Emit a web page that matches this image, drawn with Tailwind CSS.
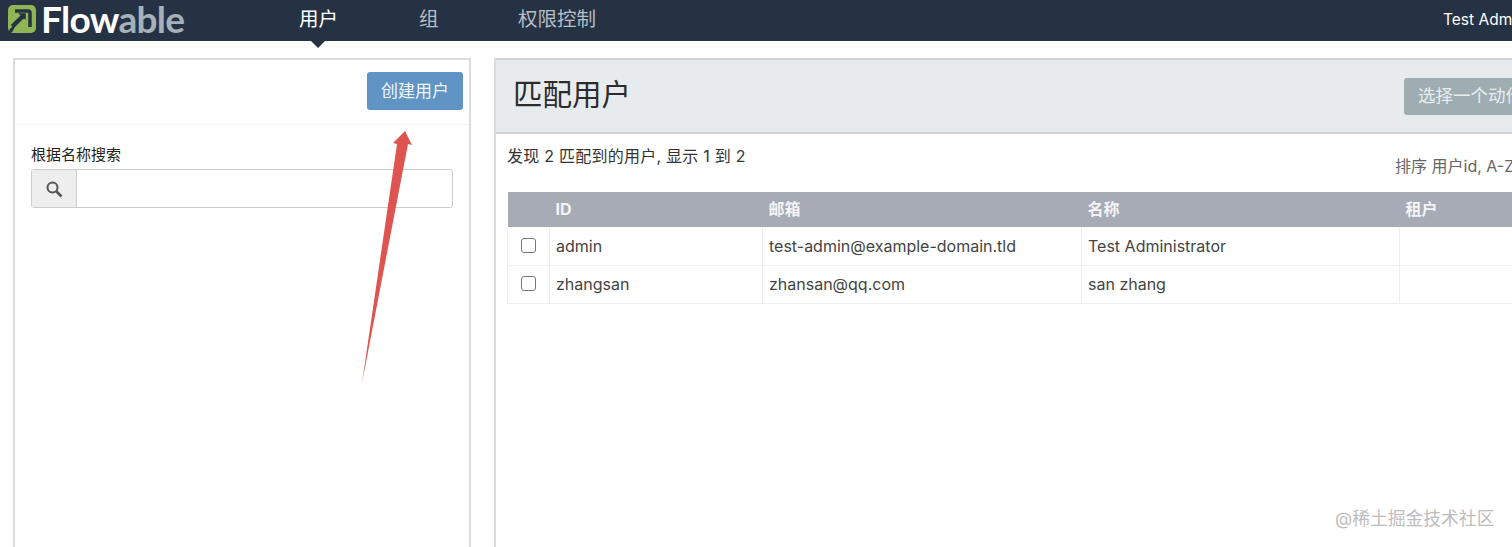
<!DOCTYPE html>
<html lang="zh-CN">
<head>
  <meta charset="UTF-8">
  <title>Flowable 用户</title>
  <script src="https://cdn.jsdelivr.net/npm/@tailwindcss/browser@4"></script>
</head>
<body class="relative h-[547px] w-[1512px] overflow-hidden bg-white font-['Inter','Noto_Sans_CJK_SC',sans-serif] text-[#333]">
  <!-- top nav -->
  <header class="flex h-[41px] items-center bg-[#253244] text-white">
    <div class="ml-[8px] flex w-[291px] shrink-0 -translate-y-[2px] items-center">
      <svg class="h-[28px] w-[28px] shrink-0" viewBox="0 0 28 28">
        <rect width="28" height="28" rx="5" fill="#8fb555"/>
        <path d="M7 6h13a2 2 0 0 1 2 2v14" fill="none" stroke="#253244" stroke-width="3.500"/>
        <path d="M2 27l2-1 2-4 10-10 1 1V9H12l1.500 1.500L4 20l1 2-3 3z" fill="#253244" stroke="#253244" stroke-width="1.500"/>
      </svg>
      <span class="ml-[5px] font-['Lato',sans-serif] text-[37px] leading-none font-bold tracking-[-0.7px]">Flow<span class="text-[#a5b0b8]">able</span></span>
    </div>
    <nav class="flex -translate-y-[1px] items-center text-[19.5px]">
      <a class="relative w-[120px] text-white">用户</a>
      <a class="w-[99px] text-[#b8bec6]">组</a>
      <a class="text-[#b8bec6]">权限控制</a>
    </nav>
    <div class="ml-auto w-[69px] shrink-0 -translate-y-[1px] overflow-hidden text-[15.5px] whitespace-nowrap">Test Administrator</div>
  </header>
  <div class="absolute top-[41px] left-[311px] h-0 w-0 border-x-[7px] border-t-[7px] border-x-transparent border-t-[#253244]"></div>

  <main class="flex items-start pt-[17px] pl-[13px]">
    <!-- filter panel -->
    <section class="h-[520px] w-[458px] shrink-0 border-2 border-[#dadcde]">
      <div class="flex h-[65px] items-start justify-end border-b border-[#f4f4f4] pt-[12px] pr-[6px]">
        <button class="h-[38px] w-[96px] rounded-[3px] bg-[#5f94c4] pt-[1px] text-[17px] text-[#f2f6fa]">创建用户</button>
      </div>
      <div class="px-[16px] pt-[20px]">
        <label class="block text-[15px] leading-[20px] text-[#222]">根据名称搜索</label>
        <div class="mt-[4px] flex h-[39px] w-[422px] rounded-[3px] border border-[#ccc]">
          <span class="flex w-[45px] items-center justify-center border-r border-[#ccc] bg-[#eee]">
            <svg class="h-[18px] w-[18px]" viewBox="0 0 18 18" fill="none" stroke="#555" stroke-width="2"><circle cx="7.500" cy="7.500" r="5"/><path d="M11.500 11.500l5 5" stroke-width="2.600"/></svg>
          </span>
          <input class="min-w-0 flex-1" type="text">
        </div>
      </div>
    </section>

    <!-- results panel -->
    <section class="ml-[23px] h-[520px] w-[1100px] shrink-0 border-l-2 border-[#dadcde]">
      <div class="flex h-[76px] items-start border-y-2 border-[#d0d3d6] bg-[#e8ebee]">
        <h1 class="mt-[14px] ml-[17px] text-[29.500px] leading-[40px] font-normal text-[#2c2c2c]">匹配用户</h1>
        <button class="mt-[18px] ml-[773px] h-[37px] w-[160px] rounded-[3px] bg-[#9eadb2] pl-[14px] text-left text-[17.500px] whitespace-nowrap text-[#e8ecee]">选择一个动作</button>
      </div>
      <div class="px-[11px]">
        <div class="relative h-[58px]">
          <p class="pt-[12px] text-[16px] leading-[20px] tracking-[0.24px] text-[#333]">发现 2 匹配到的用户, 显示 1 到 2</p>
          <p class="absolute top-[22px] left-[888px] text-[16px] leading-[20px] whitespace-nowrap text-[#666]">排序 用户id, A-Z</p>
        </div>
        <table class="w-[1060px] table-fixed border-collapse text-[16px] text-[#444]">
          <colgroup>
            <col class="w-[42px]"><col class="w-[213px]"><col class="w-[319px]"><col class="w-[318px]"><col>
          </colgroup>
          <thead>
            <tr class="h-[35px] bg-[#a7abb5] text-left font-bold text-[#f4f5f7]">
              <th></th><th class="pb-[2px] pl-[6px]">ID</th><th class="pb-[2px] pl-[6px]">邮箱</th><th class="pb-[2px] pl-[6px]">名称</th><th class="pb-[2px] pl-[6px]">租户</th>
            </tr>
          </thead>
          <tbody>
            <tr class="h-[38px] border-b border-[#eeeeee]">
              <td class="border-x border-[#eeeeee] text-center"><span class="inline-block h-[15px] w-[15px] translate-y-[1px] rounded-[3px] border border-[#777] bg-white"></span></td>
              <td class="border-r border-[#eeeeee] pl-[6px]">admin</td>
              <td class="border-r border-[#eeeeee] pl-[6px]">test-admin@example-domain.tld</td>
              <td class="border-r border-[#eeeeee] pl-[6px]">Test Administrator</td>
              <td></td>
            </tr>
            <tr class="h-[38px] border-b border-[#eeeeee]">
              <td class="border-x border-[#eeeeee] text-center"><span class="inline-block h-[15px] w-[15px] translate-y-[1px] rounded-[3px] border border-[#777] bg-white"></span></td>
              <td class="border-r border-[#eeeeee] pl-[6px]">zhangsan</td>
              <td class="border-r border-[#eeeeee] pl-[6px]">zhansan@qq.com</td>
              <td class="border-r border-[#eeeeee] pl-[6px]">san zhang</td>
              <td></td>
            </tr>
          </tbody>
        </table>
      </div>
    </section>
  </main>

  <!-- annotation arrow -->
  <svg class="absolute top-[125px] left-[350px] h-[265px] w-[80px]" viewBox="0 0 80 265">
    <path d="M12 258 L47 19 L43 18 L55 6 L62 20 L58 19 Z" fill="#de5450"/>
  </svg>
  <!-- watermark -->
  <div class="absolute top-[509px] left-[1335px] text-[17.800px] leading-[20px] whitespace-nowrap text-[#bdbdbd]">@稀土掘金技术社区</div>
</body>
</html>
